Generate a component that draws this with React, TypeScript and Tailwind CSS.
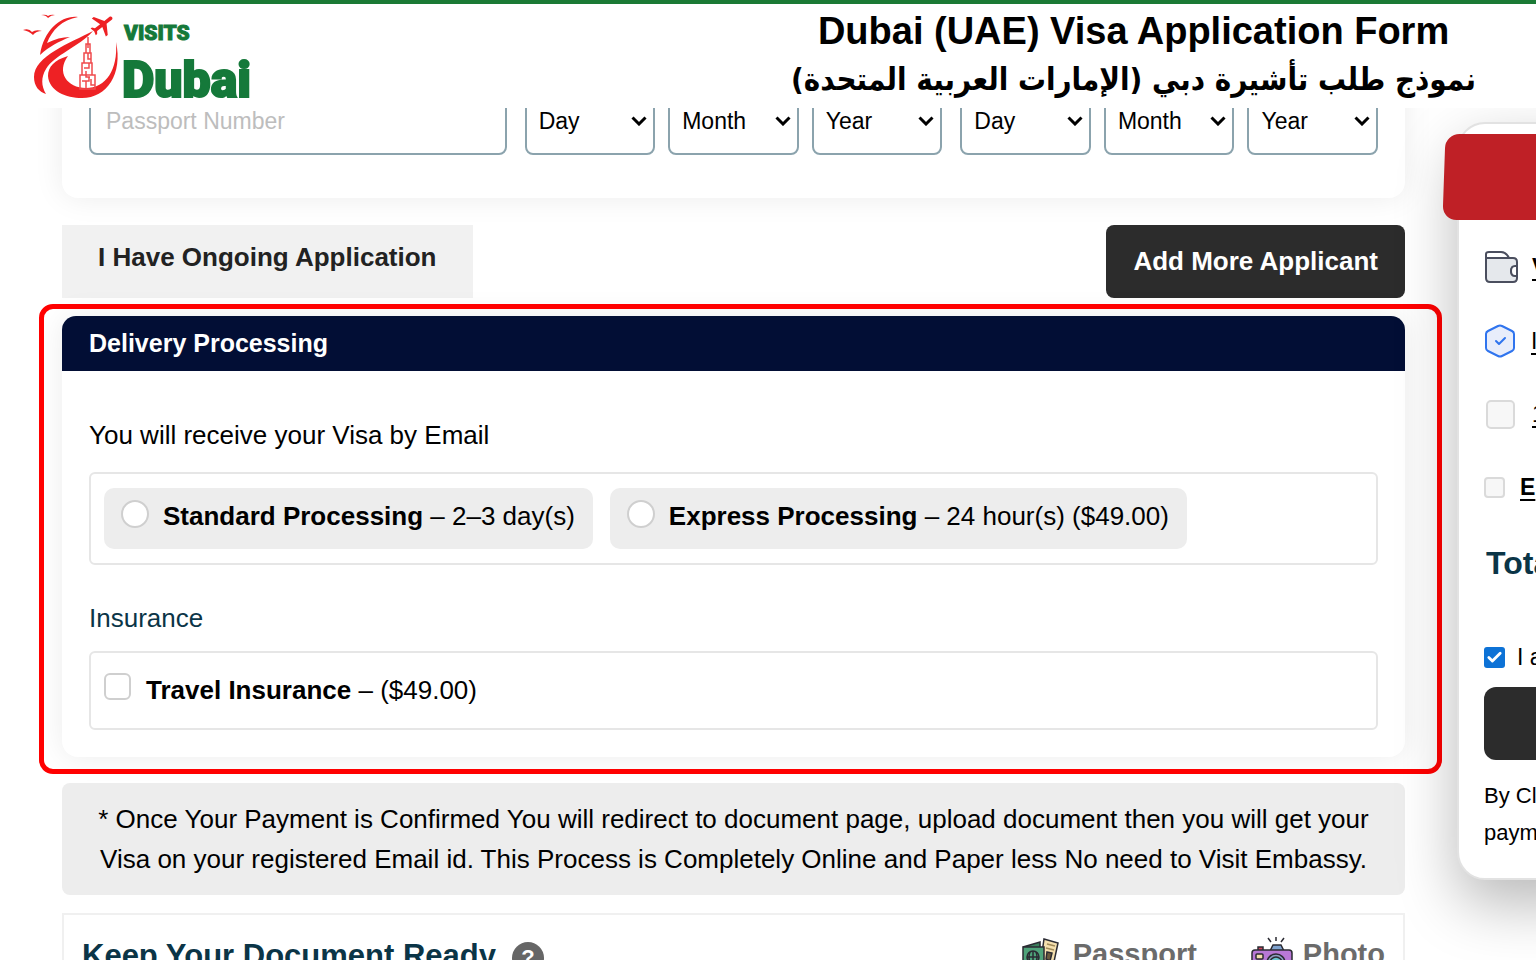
import { Check } from "lucide-react";

const font = "font-['Liberation_Sans',Arial,sans-serif]";

function Logo() {
  return (
    <svg
      viewBox="0 0 240 92"
      className="h-[92px] w-[240px] shrink-0"
      role="img"
      aria-label="Visits Dubai"
    >
      <g fill="#ee2124">
        <path d="M3 20q6-2 9 2 4-3 10-1-6 0-9 4-4-4-10-5z" />
        <path d="M21 5q5-1 7 1 3-2 7-1-4 0-7 3-2-3-7-3z" />
        <path d="M58 7C42 5 24 19 20 45c10-9 18-13 30-18-8 0-15 2-23 6C32 20 42 10 58 7z" />
        <path d="M73 21C50 33 14 46 14 67c0 9 5 15 12 17-5-8-5-17 0-25 8-14 33-22 47-38z" />
        <path d="M48 46c-14 4-20 11-20 20 1 15 18 22 34 22 25 0 41-24 34-56 2 28-10 46-30 46-19 0-30-16-18-32z" />
        <path
          d="M21 16v-2l-8-5V3.500c0-.83-.67-1.500-1.500-1.500S10 2.670 10 3.500V9l-8 5v2l8-2.500V19l-2 1.500V22l3.500-1 3.500 1v-1.500L13 19v-5.500l8 2.500z"
          transform="translate(83 15) rotate(52) scale(1.200) translate(-12 -12)"
        />
      </g>
      {/* Tower */}
      <g fill="none" stroke="#f04b4d" strokeWidth="1.500">
        <path d="M68 27v11M66 34h4v9h-4zM64 43h7v10h-7zM62 53h10v12H62zM60 65h15v14H60z" />
        <path d="M68 43v6h3M64 58h5v-5M66 61v6h4M62 71h7v-4M66 71v7M71 69v6h4" />
      </g>
      <g
        fill="#15793a"
        stroke="#15793a"
        className="font-[Roboto,sans-serif] font-black"
      >
        <text x="104" y="30" fontSize="21" strokeWidth="1">
          VISITS
        </text>
        <text x="102" y="87" fontSize="50" strokeWidth="2">
          Dubai
        </text>
      </g>
    </svg>
  );
}

function Header() {
  return (
    <header className="relative z-20 flex h-[108px] shrink-0 items-start justify-between border-t-4 border-[#1b7a35] bg-white pr-[60px] pl-5">
      <a href="#home" className="pt-[6px]">
        <Logo />
      </a>
      <div className="text-center font-bold text-black">
        <h1 className="text-[38px] leading-[54px]">
          Dubai (UAE) Visa Application Form
        </h1>
        <p
          dir="rtl"
          lang="ar"
          className="font-['DejaVu_Sans_Condensed','DejaVu_Sans',sans-serif] text-[31px] leading-[42px]"
        >
          نموذج طلب تأشيرة دبي (الإمارات العربية المتحدة)
        </p>
      </div>
    </header>
  );
}

function DateSelect({ label, name }: { label: string; name: string }) {
  return (
    <div className="relative">
      <select
        aria-label={name}
        className="h-[71px] w-full appearance-none rounded-[8px] border-2 border-[#8ba3ad] bg-white pt-[3px] pl-[12px] text-[23px] text-black"
      >
        <option>{label}</option>
      </select>
      <svg
        viewBox="0 0 16 10"
        className="pointer-events-none absolute top-[32px] right-[8px] h-[10px] w-4"
        fill="none"
        stroke="#000"
        strokeWidth="3"
      >
        <path d="M1.500 1.500L8 8l6.500-6.500" />
      </svg>
    </div>
  );
}

function DateGroup({ name }: { name: string }) {
  return (
    <div className="grid grid-cols-3 gap-[13px]">
      {["Day", "Month", "Year"].map((part) => (
        <DateSelect key={part} label={part} name={`${name} ${part}`} />
      ))}
    </div>
  );
}

const processing = [
  { id: "standard", title: "Standard Processing", detail: "2–3 day(s)" },
  { id: "express", title: "Express Processing", detail: "24 hour(s) ($49.00)" },
];

function DeliverySection() {
  return (
    <section className="relative mt-[18px] rounded-[16px] bg-white shadow-[0_0_30px_rgba(0,0,0,0.08)]">
      <h2 className="rounded-t-[14px] bg-[#020e35] px-[27px] text-[25px] leading-[55px] font-bold text-white">
        Delivery Processing
      </h2>
      <div className="px-[27px] pt-[44px] pb-[27px] text-[26px] text-black">
        <p className="leading-[40px]">You will receive your Visa by Email</p>
        <div className="mt-[17px] flex gap-[17px] rounded-md border-2 border-[#e6e6e6] px-[13px] py-[14px]">
          {processing.map((option) => (
            <label
              key={option.id}
              className="flex h-[61px] items-center rounded-[10px] bg-[#ededed] pr-[18px] pl-[17px] whitespace-nowrap"
            >
              <input
                type="radio"
                name="processing"
                className="mr-[14px] mb-[10px] size-[28px] appearance-none rounded-full border-2 border-[#cfcfcf] bg-white"
              />
              <span className="pb-1">
                <b>{option.title}</b> – {option.detail}
              </span>
            </label>
          ))}
        </div>
        <p className="mt-[33px] leading-[40px] text-[#0b3547]">Insurance</p>
        <div className="mt-[13px] rounded-md border-2 border-[#e6e6e6] px-[13px]">
          <label className="flex h-[75px] items-center">
            <input
              type="checkbox"
              className="mr-[15px] mb-[9px] size-[27px] appearance-none rounded-[6px] border-2 border-[#cfcfcf] bg-white"
            />
            <span>
              <b>Travel Insurance</b> – ($49.00)
            </span>
          </label>
        </div>
      </div>
      {/* Highlight frame */}
      <div className="pointer-events-none absolute -top-3 -right-[37px] -bottom-[17px] -left-[23px] rounded-[14px] border-[5px] border-[#ff0000]" />
    </section>
  );
}

function PassportIcon() {
  return (
    <svg viewBox="0 0 40 40" className="size-10" stroke="#2b2b33" strokeWidth="1.500">
      <path d="M23 2l14 4-6 28-12-4z" fill="#f4dfae" />
      <path d="M26 7l8 2M25 11l8 2" fill="none" stroke="#a08a58" />
      <path d="M26 15l5 1-2 8-4-2z" fill="#6b5b3e" />
      <path d="M2 10l17-5v6z" fill="#3b7f5c" />
      <path d="M2 10h21v28H2z" fill="#4fa37a" />
      <circle cx="12" cy="20" r="6" fill="none" />
      <path d="M6 20h12M12 14v12M9 15q-2 5 0 10M15 15q2 5 0 10" fill="none" />
    </svg>
  );
}

function CameraIcon() {
  return (
    <svg viewBox="0 0 42 40" className="h-10 w-[42px]" stroke="#2b2b33" strokeWidth="1.500">
      <path d="M20 5l-3-4M25 4V0M30 5l3-4" fill="none" />
      <path d="M19 14l3-6h8l3 6z" fill="#7fa3cf" />
      <path d="M7 14v-4h5v4z" fill="#d6455c" />
      <rect x="1" y="13" width="40" height="26" rx="3" fill="#b878d6" />
      <rect x="5" y="17" width="7" height="5" rx="1" fill="#f4dfae" />
      <circle cx="25" cy="26" r="9" fill="#8e9fc4" />
      <circle cx="25" cy="26" r="6" fill="#69c5cf" />
    </svg>
  );
}

function DocumentsSection() {
  return (
    <section className="mt-[18px] flex items-start justify-between border-2 border-[#f0f0f0] bg-white px-[18px] pt-[22px]">
      <h2 className="flex items-center gap-4 text-[31px] leading-[38px] font-bold text-[#0b3547]">
        Keep Your Document Ready
        <button
          type="button"
          aria-label="Help"
          className="mt-1 size-[32px] rounded-full bg-[#666] text-[22px] leading-[32px] text-white"
        >
          ?
        </button>
      </h2>
      <ul className="flex gap-[54px] text-[29px] leading-[34px] font-bold text-[#6b6b6b]">
        <li className="flex gap-3">
          <PassportIcon />
          Passport
        </li>
        <li className="flex gap-[10px]">
          <CameraIcon />
          Photo
        </li>
      </ul>
    </section>
  );
}

function Summary() {
  return (
    <aside className="relative mt-[14px] w-[79px] shrink-0">
      <div className="w-[400px] rounded-[28px] border-2 border-[#e2e2e2] bg-white pt-[10px] pb-[27px] text-[23px] whitespace-nowrap text-black shadow-[0_24px_60px_rgba(0,0,0,0.28)]">
        <div className="-ml-[15px] h-[86px] -skew-x-2 rounded-[14px] bg-[#bf2026]" />
        <div className="pl-[25px]">
          <div className="mt-[29px] flex h-[36px] items-center gap-[14px]">
            <svg
              viewBox="0 0 34 34"
              className="size-[34px]"
              fill="#e5e8ec"
              stroke="#4a4e5e"
              strokeWidth="2"
            >
              <path d="M2 9V4q0-2 3-2h12q5 0 8 6" fill="#fff" />
              <path d="M2 8h27q4 0 4 4v5q-6 0-6 4t6 4v3q0 4-4 4H6q-4 0-4-4z" />
              <path d="M33 16h-2q-4 0-4 5t4 5h2z" fill="#fff" />
            </svg>
            <a href="#visa" className="font-bold underline underline-offset-4">
              V
            </a>
          </div>
          <div className="mt-[38px] flex h-[36px] items-center gap-[15px]">
            <svg
              viewBox="0 0 32 34"
              className="h-[34px] w-[32px]"
              fill="#e8edfb"
              stroke="#2f74ee"
              strokeWidth="2"
              strokeLinecap="round"
              strokeLinejoin="round"
            >
              <path d="M14 2q2-1 4 0l10 5q2 1 2 3v14q0 2-2 3l-10 5q-2 1-4 0L4 27q-2-1-2-3V10q0-2 2-3z" />
              <path d="M12 17l3 3 6-6" fill="none" />
            </svg>
            <a href="#insurance" className="underline underline-offset-4">
              I
            </a>
          </div>
          <div className="mt-[37px] flex h-[36px] items-center gap-[17px] pl-[2px]">
            <input
              type="checkbox"
              aria-label="Applicants"
              className="size-[29px] appearance-none rounded-[5px] border-2 border-[#dadada] bg-[#f7f7f7]"
            />
            <a href="#applicants" className="underline underline-offset-4">
              1
            </a>
          </div>
          <div className="mt-[37px] flex h-[36px] items-center gap-[15px]">
            <input
              type="checkbox"
              aria-label="Express"
              className="size-[21px] appearance-none rounded-[4px] border-2 border-[#dadada] bg-[#f7f7f7]"
            />
            <a href="#express" className="font-bold underline underline-offset-4">
              E
            </a>
          </div>
          <p className="mt-[38px] pl-[2px] text-[32px] leading-[40px] font-bold text-[#0b3547]">
            Total
          </p>
          <label className="mt-[56px] flex h-[36px] items-center gap-[12px]">
            <span className="relative flex">
              <input
                type="checkbox"
                defaultChecked
                className="size-[21px] appearance-none rounded-[3px] bg-[#0d72d6]"
              />
              <Check
                className="pointer-events-none absolute top-[2px] left-[2px] size-[17px] text-white"
                strokeWidth={4}
              />
            </span>
            I agree
          </label>
          <button
            type="button"
            aria-label="Pay now"
            className="mt-[12px] block h-[73px] w-[340px] rounded-[12px] bg-[#2c2c2c]"
          />
          <p className="mt-[17px] text-[22px] leading-[37px]">
            By Clicking
            <br />
            payment
          </p>
        </div>
      </div>
    </aside>
  );
}

export default function App() {
  return (
    <div
      className={`flex h-screen flex-col overflow-hidden bg-white ${font}`}
    >
      <Header />
      <div className="flex min-h-0 flex-1 items-start gap-[52px] pl-[62px]">
        <main className="min-w-0 flex-1">
          <section className="relative -mt-[48px] rounded-[16px] bg-white px-[27px] pt-6 pb-[43px] shadow-[0_0_30px_rgba(0,0,0,0.08)]">
            <div className="grid grid-cols-3 gap-[18px]">
              <input
                type="text"
                aria-label="Passport Number"
                placeholder="Passport Number"
                className="h-[71px] w-full rounded-[8px] border-2 border-[#8ba3ad] bg-white px-[15px] pt-[3px] text-[23px] text-black placeholder:text-[#bdbdbd]"
              />
              <DateGroup name="Issue" />
              <DateGroup name="Expiry" />
            </div>
          </section>

          <div className="relative mt-[27px] flex h-[73px] justify-between text-[26px] font-bold">
            <button
              type="button"
              className="bg-[#f1f1f1] px-[36px] pb-2 text-[#222]"
            >
              I Have Ongoing Application
            </button>
            <button
              type="button"
              className="rounded-[8px] bg-[#2c2c2c] px-[27px] text-white"
            >
              Add More Applicant
            </button>
          </div>

          <DeliverySection />

          <p className="relative mt-[26px] rounded-[8px] bg-[#ededed] px-4 py-4 text-center text-[26px] leading-[40px] text-black">
            * Once Your Payment is Confirmed You will redirect to document page,
            upload document then you will get your Visa on your registered Email
            id. This Process is Completely Online and Paper less No need to
            Visit Embassy.
          </p>

          <DocumentsSection />
        </main>
        <Summary />
      </div>
    </div>
  );
}
